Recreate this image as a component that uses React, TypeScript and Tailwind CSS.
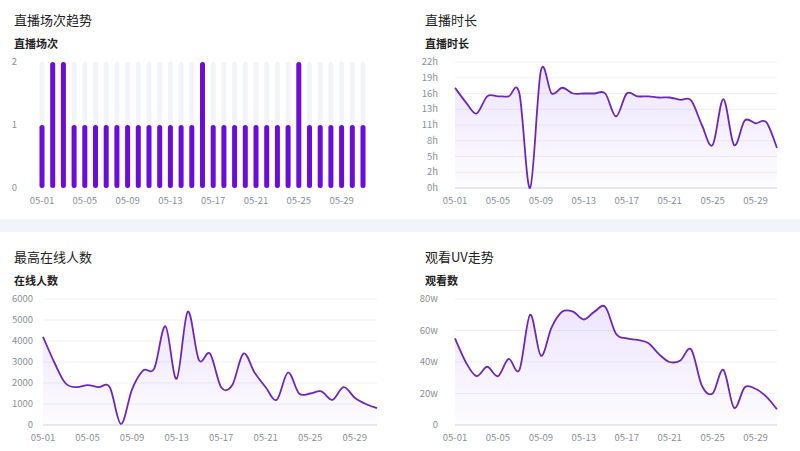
const days = Array.from({ length: 31 }, (_, i) => i);
const labels = [0, 4, 8, 12, 16, 20, 24, 28];
const fmt = (i: number) => `05-${String(i + 1).padStart(2, '0')}`;

function smooth(pts: [number, number][]) {
  let d = `M${pts[0][0]},${pts[0][1]}`;
  for (let i = 0; i < pts.length - 1; i++) {
    const p0 = pts[i - 1] || pts[i];
    const p1 = pts[i];
    const p2 = pts[i + 1];
    const p3 = pts[i + 2] || p2;
    const c1x = p1[0] + (p2[0] - p0[0]) / 6;
    const c1y = p1[1] + (p2[1] - p0[1]) / 6;
    const c2x = p2[0] - (p3[0] - p1[0]) / 6;
    const c2y = p2[1] - (p3[1] - p1[1]) / 6;
    d += ` C${c1x},${c1y} ${c2x},${c2y} ${p2[0]},${p2[1]}`;
  }
  return d;
}

const TOP = 10;
const BOT = 136;

function LineChart({ id, data, max, ticks, labelRight, x0 }: { id: string; data: number[]; max: number; ticks: string[]; labelRight: number; x0: number }) {
  const x1 = 377;
  const step = (x1 - x0) / 30;
  const pts: [number, number][] = data.map((v, i) => [x0 + i * step, BOT - (v / max) * (BOT - TOP)]);
  const line = smooth(pts);
  const n = ticks.length - 1;
  return (
    <svg width="400" height="162" className="block">
      <defs>
        <linearGradient id={id} x1="0" y1="0" x2="0" y2="1">
          <stop offset="0" stopColor="#8b5cf6" stopOpacity="0.16" />
          <stop offset="1" stopColor="#8b5cf6" stopOpacity="0.02" />
        </linearGradient>
      </defs>
      {ticks.map((t, i) => {
        const y = BOT - (i / n) * (BOT - TOP);
        return (
          <g key={t}>
            <line x1={x0} x2={x1} y1={y} y2={y} stroke="#eef0f4" strokeWidth="1" />
            <text x={labelRight} y={y + 3} textAnchor="end" fontSize="9.5" fill="#8a8f99">{t}</text>
          </g>
        );
      })}
      <line x1={x0} x2={x1} y1={BOT} y2={BOT} stroke="#d9dce2" />
      {labels.map((i) => (
        <text key={i} x={x0 + i * step} y={BOT + 16} textAnchor="middle" fontSize="9.5" fill="#8a8f99">{fmt(i)}</text>
      ))}
      <path d={`${line} L${x1},${BOT} L${x0},${BOT} Z`} fill={`url(#${id})`} />
      <path d={line} fill="none" stroke="#6d28b8" strokeWidth="1.8" />
    </svg>
  );
}

function BarChart() {
  const x0 = 42;
  const step = (363 - x0) / 30;
  const vals = days.map((i) => (i === 1 || i === 2 || i === 15 || i === 24 ? 2 : 1));
  return (
    <svg width="400" height="162" className="block">
      {['0', '1', '2'].map((t, i) => (
        <text key={t} x="17" y={BOT - i * 63 + 3} textAnchor="end" fontSize="9.5" fill="#8a8f99">{t}</text>
      ))}
      {days.map((i) => {
        const x = x0 + i * step;
        const h = vals[i] * 63;
        return (
          <g key={i}>
            <rect x={x - 2.5} y={TOP} width="5" height={BOT - TOP} rx="2.5" fill="#f3f4f7" />
            <rect x={x - 2.5} y={BOT - h} width="5" height={h} rx="2.5" fill="#6a0dd8" />
          </g>
        );
      })}
      {labels.map((i) => (
        <text key={i} x={x0 + i * step} y={BOT + 16} textAnchor="middle" fontSize="9.5" fill="#8a8f99">{fmt(i)}</text>
      ))}
    </svg>
  );
}

function Panel({ title, sub, top, pad, children }: { title: string; sub: string; top: string; pad: string; children: React.ReactNode }) {
  return (
    <div className={`bg-white ${top}`}>
      <div className={`${pad} text-[13px] text-[#222] leading-none`}>{title}</div>
      <div className={`${pad} mt-[12px] mb-[3px] text-[11px] font-bold text-[#222] leading-none`}>{sub}</div>
      {children}
    </div>
  );
}

const hours = [17.5, 15, 13, 16, 16, 16, 16.5, 0, 20.5, 16.5, 17.5, 16.5, 16.5, 16.5, 16.5, 12.5, 16.5, 16, 16, 15.8, 15.8, 15.4, 15.3, 11, 7.5, 15.5, 7.5, 11.8, 11.3, 11.5, 7];
const online = [4200, 3000, 2000, 1800, 1900, 1800, 1800, 50, 1700, 2600, 2700, 4700, 2200, 5400, 3100, 3400, 1800, 1900, 3400, 2500, 1800, 1200, 2500, 1500, 1500, 1600, 1200, 1800, 1300, 1000, 800];
const uv = [55, 40, 31, 37, 31, 42, 35, 70, 44, 62, 72, 72, 67, 72, 75, 58, 55, 54, 52, 45, 40, 41, 48, 25, 20, 35, 11, 24, 23, 18, 10];

export default function App() {
  return (
    <div className="w-[800px] h-[451px] overflow-hidden bg-[#f2f4f9]" style={{ fontFamily: '"Noto Sans CJK SC", "Liberation Sans", sans-serif' }}>
      <div className="grid grid-cols-2 gap-y-[13px] h-full">
        <Panel title="直播场次趋势" sub="直播场次" top="pt-[13px] h-[219px]" pad="px-[14px]">
          <BarChart />
        </Panel>
        <Panel title="直播时长" sub="直播时长" top="pt-[13px] h-[219px]" pad="px-[25px]">
          <LineChart id="g1" data={hours} max={22} ticks={['0h', '2h', '5h', '8h', '11h', '13h', '16h', '19h', '22h']} labelRight={38} x0={55} />
        </Panel>
        <Panel title="最高在线人数" sub="在线人数" top="pt-[18px]" pad="px-[14px]">
          <LineChart id="g2" data={online} max={6000} ticks={['0', '1000', '2000', '3000', '4000', '5000', '6000']} labelRight={33} x0={43} />
        </Panel>
        <Panel title="观看UV走势" sub="观看数" top="pt-[18px]" pad="px-[25px]">
          <LineChart id="g3" data={uv} max={80} ticks={['0', '20w', '40w', '60w', '80w']} labelRight={38} x0={55} />
        </Panel>
      </div>
    </div>
  );
}
